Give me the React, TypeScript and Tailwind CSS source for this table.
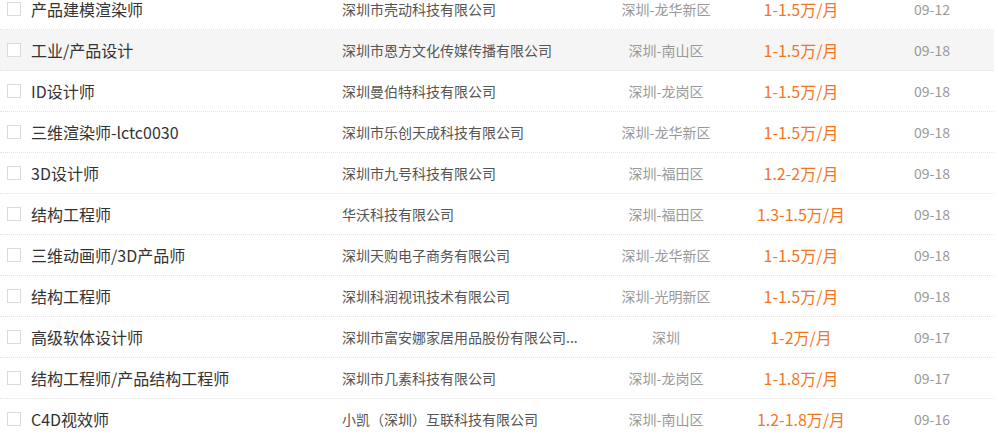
const jobs = [
  { title: '产品建模渲染师', company: '深圳市壳动科技有限公司', place: '深圳-龙华新区', pay: '1-1.5万/月', date: '09-12' },
  { title: '工业/产品设计', company: '深圳市恩方文化传媒传播有限公司', place: '深圳-南山区', pay: '1-1.5万/月', date: '09-18' },
  { title: 'ID设计师', company: '深圳曼伯特科技有限公司', place: '深圳-龙岗区', pay: '1-1.5万/月', date: '09-18' },
  { title: '三维渲染师-lctc0030', company: '深圳市乐创天成科技有限公司', place: '深圳-龙华新区', pay: '1-1.5万/月', date: '09-18' },
  { title: '3D设计师', company: '深圳市九号科技有限公司', place: '深圳-福田区', pay: '1.2-2万/月', date: '09-18' },
  { title: '结构工程师', company: '华沃科技有限公司', place: '深圳-福田区', pay: '1.3-1.5万/月', date: '09-18' },
  { title: '三维动画师/3D产品师', company: '深圳天购电子商务有限公司', place: '深圳-龙华新区', pay: '1-1.5万/月', date: '09-18' },
  { title: '结构工程师', company: '深圳科润视讯技术有限公司', place: '深圳-光明新区', pay: '1-1.5万/月', date: '09-18' },
  { title: '高级软体设计师', company: '深圳市富安娜家居用品股份有限公司...', place: '深圳', pay: '1-2万/月', date: '09-17' },
  { title: '结构工程师/产品结构工程师', company: '深圳市几素科技有限公司', place: '深圳-龙岗区', pay: '1-1.8万/月', date: '09-17' },
  { title: 'C4D视效师', company: '小凯（深圳）互联科技有限公司', place: '深圳-南山区', pay: '1.2-1.8万/月', date: '09-16' },
]

export default function App() {
  return (
    <div
      className="w-[998px] h-[439px] overflow-hidden bg-white"
      style={{ fontFamily: '"Noto Sans CJK SC", "Microsoft YaHei", sans-serif' }}
    >
      <div className="w-[994px] -mt-[11px]">
        {jobs.map((job, i) => (
          <div
            key={i}
            className={`flex items-center h-[41px] border-b border-dotted border-[#e2e2e2] ${i === 1 ? 'bg-[#f5f5f5]' : ''}`}
          >
            <div className="w-[342px] flex items-center shrink-0">
              <span className="ml-[7px] w-[14px] h-[14px] border border-[#dadada] bg-white shrink-0" />
              <span className="ml-[10px] text-[16px] text-[#333] whitespace-nowrap">{job.title}</span>
            </div>
            <div className="w-[258px] shrink-0 text-[14px] text-[#555] whitespace-nowrap">{job.company}</div>
            <div className="w-[132px] shrink-0 text-center text-[14px] text-[#999] whitespace-nowrap">{job.place}</div>
            <div className="w-[138px] shrink-0 text-center text-[16px] text-[#f3761f] whitespace-nowrap">{job.pay}</div>
            <div className="w-[124px] shrink-0 text-center text-[14px] text-[#999]">{job.date}</div>
          </div>
        ))}
      </div>
    </div>
  )
}
